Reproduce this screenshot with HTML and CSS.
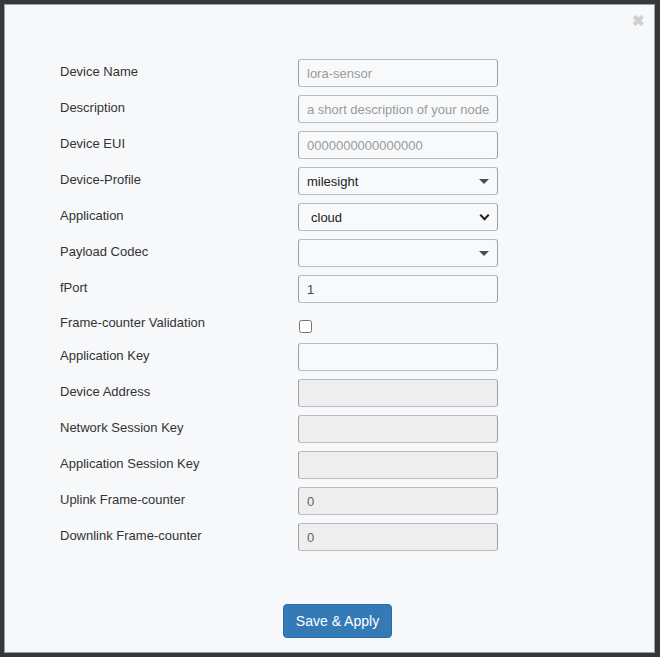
FILE: index.html
```html
<!DOCTYPE html>
<html lang="en">
<head>
    <meta charset="UTF-8">
    <meta name="viewport" content="width=device-width, initial-scale=1.0">
    <title>Add Device</title>
    <link rel="stylesheet" href="styles.css">
</head>
<body>

    <div class="modal">
        <span class="close">&#x2716;</span>

        <div class="form">
            <div class="row">
                <label for="devName">Device Name</label>
                <input type="text" id="devName" placeholder="lora-sensor">
            </div>
            <div class="row">
                <label for="devDesc">Description</label>
                <input type="text" id="devDesc" placeholder="a short description of your node">
            </div>
            <div class="row">
                <label for="devEui">Device EUI</label>
                <input type="text" id="devEui" placeholder="0000000000000000">
            </div>
            <div class="row">
                <label for="devProfile">Device-Profile</label>
                <div class="select caret">
                    <select id="devProfile">
                        <option>milesight</option>
                    </select>
                </div>
            </div>
            <div class="row">
                <label for="devApp">Application</label>
                <div class="select chevron">
                    <select id="devApp">
                        <option>cloud</option>
                    </select>
                </div>
            </div>
            <div class="row">
                <label for="devCodec">Payload Codec</label>
                <div class="select caret">
                    <select id="devCodec">
                        <option></option>
                    </select>
                </div>
            </div>
            <div class="row">
                <label for="devPort">fPort</label>
                <input type="text" id="devPort" value="1">
            </div>
            <div class="row check-row">
                <label for="devFcnt">Frame-counter Validation</label>
                <input type="checkbox" id="devFcnt">
            </div>
            <div class="row">
                <label for="appKey">Application Key</label>
                <input type="text" id="appKey">
            </div>
            <div class="row">
                <label for="devAddr">Device Address</label>
                <input type="text" id="devAddr" disabled>
            </div>
            <div class="row">
                <label for="nwkSKey">Network Session Key</label>
                <input type="text" id="nwkSKey" disabled>
            </div>
            <div class="row">
                <label for="appSKey">Application Session Key</label>
                <input type="text" id="appSKey" disabled>
            </div>
            <div class="row">
                <label for="upCnt">Uplink Frame-counter</label>
                <input type="text" id="upCnt" value="0" disabled>
            </div>
            <div class="row">
                <label for="downCnt">Downlink Frame-counter</label>
                <input type="text" id="downCnt" value="0" disabled>
            </div>
        </div>

        <div class="footer">
            <button class="btn-save">Save &amp; Apply</button>
        </div>
    </div>

</body>
</html>
```

FILE: styles.css
```css
body {
    background-color: #33383d;
    font-family: "Liberation Sans", Arial, sans-serif;
    color: #333;
    margin: 0;
    padding: 4px 5px 4px 4px;
    height: 657px;
    box-sizing: border-box;
}

.modal {
    position: relative;
    background-color: #f7f8fa;
    border: 1px solid #9aa0a6;
    height: 649px;
    box-sizing: border-box;
    padding: 54px 0 0 55px;
    display: flex;
    flex-direction: column;
}

.close {
    position: absolute;
    top: 8px;
    right: 9px;
    font-size: 15px;
    line-height: 15px;
    color: #cfcfcf;
    font-weight: bold;
}

.form {
    display: flex;
    flex-direction: column;
    gap: 8px;
}

.row {
    display: grid;
    grid-template-columns: 238px 200px;
    height: 28px;
}

.row label {
    font-size: 13px;
    line-height: 15px;
    padding-top: 5px;
    color: #333;
}

.check-row {
    height: 24px;
}

.check-row label {
    padding-top: 4px;
}

input[type="text"], select {
    width: 200px;
    height: 28px;
    box-sizing: border-box;
    border: 1px solid #b4bac0;
    border-bottom-color: #b9bec4;
    border-right-color: #9aa0a6;
    border-left-color: #9aa0a6;
    border-radius: 3px;
    background-color: #f8f9fa;
    font-family: "Liberation Sans", Arial, sans-serif;
    font-size: 13px;
    color: #444;
    padding: 0 8px;
    margin: 0;
    outline: none;
}

input[type="text"]::placeholder {
    color: #999;
}

input[type="text"]:disabled {
    background-color: #eeeeee;
    color: #5f6468;
}

input[type="checkbox"] {
    width: 13px;
    height: 13px;
    margin: 9px 0 0 1px;
}

.select {
    position: relative;
    width: 200px;
    height: 28px;
}

select {
    appearance: none;
    -webkit-appearance: none;
    color: #222;
}

.chevron select {
    padding-left: 12px;
}

.caret::after {
    content: "";
    position: absolute;
    right: 9px;
    top: 12px;
    border-left: 5px solid transparent;
    border-right: 5px solid transparent;
    border-top: 5px solid #4a4f55;
    pointer-events: none;
}

.chevron::after {
    content: "";
    position: absolute;
    right: 10px;
    top: 9px;
    width: 5px;
    height: 5px;
    border-right: 2px solid #222;
    border-bottom: 2px solid #222;
    transform: rotate(45deg);
    pointer-events: none;
}

.footer {
    margin-top: auto;
    padding-bottom: 14px;
    padding-right: 36px;
    display: flex;
    justify-content: center;
}

.btn-save {
    background-color: #337ab7;
    color: white;
    font-family: "Liberation Sans", Arial, sans-serif;
    font-size: 14px;
    border: 1px solid #2e6da4;
    border-radius: 4px;
    width: 109px;
    height: 34px;
    padding: 0;
    margin-left: -3px;
    cursor: pointer;
}

.btn-save:hover {
    background-color: #286090;
}
```
